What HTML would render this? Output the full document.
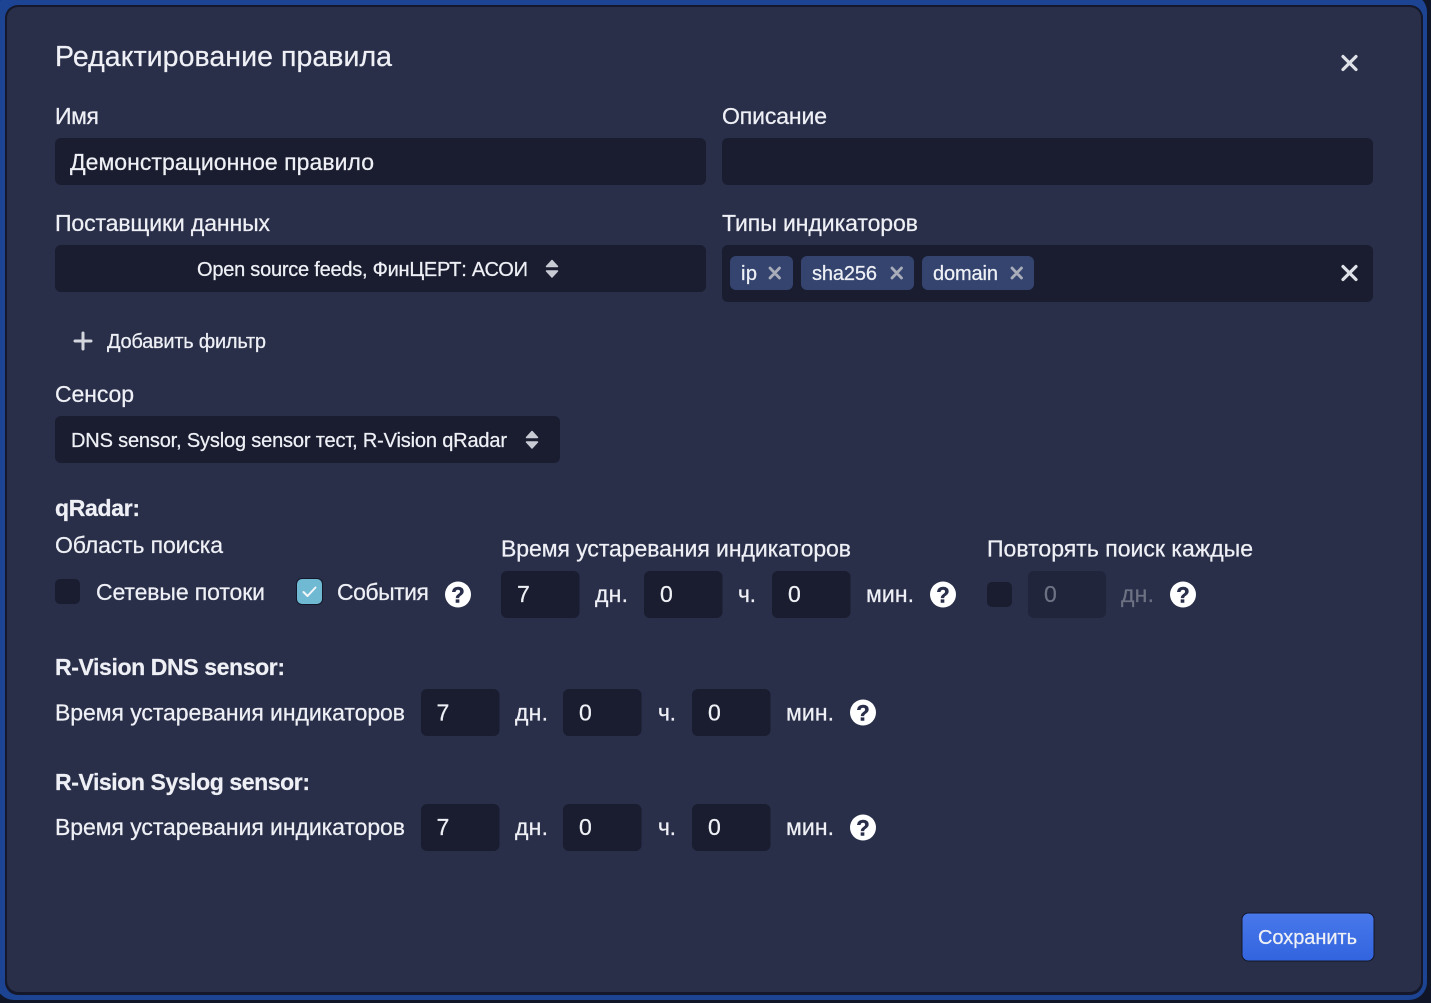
<!DOCTYPE html>
<html lang="ru"><head><meta charset="utf-8"><title>Редактирование правила</title>
<style>
html,body{margin:0;padding:0;background:#101627;width:1431px;height:1003px;overflow:hidden}
svg{display:block}
text{font-family:"Liberation Sans","DejaVu Sans",sans-serif;fill:#eef0f5;font-size:23px;stroke:#eef0f5;stroke-width:.25px}
.s{font-size:20px}
.b{font-weight:bold}
.q{font-size:22px;font-weight:bold;fill:#282d49;stroke:#282d49;stroke-width:.5px;text-anchor:middle}
</style></head><body>
<svg width="1431" height="1003" viewBox="0 0 1431 1003" xmlns="http://www.w3.org/2000/svg">
<defs><linearGradient id="g" x1="0" y1="0" x2="0" y2="1"><stop offset="0" stop-color="#4878ea"/><stop offset="1" stop-color="#3264df"/></linearGradient></defs>
<rect width="1431" height="1003" fill="#101627"/>
<rect x="-4" y="-6" width="1431" height="1006" rx="18" fill="#1c4493"/>
<rect x="5" y="5" width="1418" height="990" rx="13" fill="#14182a"/>
<rect x="7" y="7" width="1414" height="985" rx="11" fill="#292e49"/>

<text x="55" y="66" style="font-size:28.500px" textLength="337">Редактирование правила</text>
<g stroke="#dfe1e8" stroke-width="3.200" stroke-linecap="round"><path d="M1343 56.500l13 13M1356 56.500l-13 13"/></g>

<text x="55" y="124" textLength="44">Имя</text>
<rect x="55" y="138" width="651" height="47" rx="6" fill="#1a1d30"/>
<text x="70" y="170" textLength="304">Демонстрационное правило</text>
<text x="722" y="124" textLength="105">Описание</text>
<rect x="722" y="138" width="651" height="47" rx="6" fill="#1a1d30"/>

<text x="55" y="231" textLength="215">Поставщики данных</text>
<rect x="55" y="245" width="651" height="47" rx="6" fill="#1a1d30"/>
<text class="s" x="197" y="276" textLength="331">Open source feeds, ФинЦЕРТ: АСОИ</text>
<path d="M552 260.500l5.500 6h-11zM552 277l5.500-6h-11z" fill="#c8cbd4" stroke="#c8cbd4" stroke-width="1.500" stroke-linejoin="round"/>

<text x="722" y="231" textLength="196">Типы индикаторов</text>
<rect x="722" y="245" width="651" height="57" rx="6" fill="#1a1d30"/>
<rect x="730" y="256" width="63" height="34" rx="6" fill="#34446e"/>
<text class="s" x="741" y="280" textLength="16">ip</text>
<rect x="801" y="256" width="113" height="34" rx="6" fill="#34446e"/>
<text class="s" x="812" y="280" textLength="65">sha256</text>
<rect x="922" y="256" width="112" height="34" rx="6" fill="#34446e"/>
<text class="s" x="933" y="280" textLength="65">domain</text>
<g stroke="#a9adba" stroke-width="2.800" stroke-linecap="round"><path d="M770 268l9.500 10M779.500 268l-9.500 10M892 268l9.500 10M901.500 268l-9.500 10M1012 268l9.500 10M1021.500 268l-9.500 10"/></g>
<path d="M1343 266.500l13 13M1356 266.500l-13 13" stroke="#dfe1e8" stroke-width="3.200" stroke-linecap="round"/>

<path d="M83 333v16M75 341h16" stroke="#d4d6de" stroke-width="3" stroke-linecap="round"/>
<text class="s" x="107" y="348" textLength="159">Добавить фильтр</text>

<text x="55" y="402" textLength="79">Сенсор</text>
<rect x="55" y="416" width="505" height="47" rx="6" fill="#1a1d30"/>
<text class="s" x="71" y="447" textLength="436">DNS sensor, Syslog sensor тест, R-Vision qRadar</text>
<path d="M532 431.500l5.500 6h-11zM532 448l5.500-6h-11z" fill="#c8cbd4" stroke="#c8cbd4" stroke-width="1.500" stroke-linejoin="round"/>

<text class="b" x="55" y="516" textLength="85">qRadar:</text>
<text x="55" y="553" textLength="168">Область поиска</text>
<rect x="55" y="579" width="25" height="25" rx="5" fill="#1a1d30"/>
<text x="96" y="600" textLength="169">Сетевые потоки</text>
<rect x="296" y="578" width="27" height="27" rx="6" fill="#14182a"/>
<rect x="297" y="579" width="25" height="25" rx="5" fill="#6fb9d2"/>
<path d="M303.500 592l4 4 8-8.500" fill="none" stroke="#f2f6f8" stroke-width="2" stroke-linecap="round" stroke-linejoin="round"/>
<text x="337" y="600" textLength="92">События</text>
<circle cx="458" cy="594.500" r="13" fill="#fff"/><text class="q" x="458" y="602.500">?</text>

<text x="501" y="556.500" textLength="350">Время устаревания индикаторов</text>
<rect x="501" y="571" width="78.500" height="47" rx="6" fill="#1a1d30"/>
<text x="517" y="602">7</text>
<text x="595" y="602" textLength="33">дн.</text>
<rect x="644" y="571" width="78.500" height="47" rx="6" fill="#1a1d30"/>
<text x="660" y="602">0</text>
<text x="738" y="602" textLength="18">ч.</text>
<rect x="772" y="571" width="78.500" height="47" rx="6" fill="#1a1d30"/>
<text x="788" y="602">0</text>
<text x="866" y="602" textLength="48">мин.</text>
<circle cx="943" cy="594.500" r="13" fill="#fff"/><text class="q" x="943" y="602.500">?</text>

<text x="987" y="556.500" textLength="266">Повторять поиск каждые</text>
<rect x="987" y="582" width="25" height="25" rx="5" fill="#1a1d30"/>
<rect x="1028" y="571" width="78" height="47" rx="6" fill="#21253c"/>
<text x="1044" y="602" style="fill:#6d7283;stroke:#6d7283">0</text>
<text x="1121" y="602" textLength="33" style="fill:#6d7283;stroke:#6d7283">дн.</text>
<circle cx="1183" cy="594.500" r="13" fill="#fff"/><text class="q" x="1183" y="602.500">?</text>

<text class="b" x="55" y="675" textLength="230">R-Vision DNS sensor:</text>
<text x="55" y="720.500" textLength="350">Время устаревания индикаторов</text>
<rect x="421" y="689" width="78.500" height="47" rx="6" fill="#1a1d30"/>
<text x="436.500" y="720.500">7</text>
<text x="515" y="720.500" textLength="33">дн.</text>
<rect x="563" y="689" width="78.500" height="47" rx="6" fill="#1a1d30"/>
<text x="579" y="720.500">0</text>
<text x="658" y="720.500" textLength="18">ч.</text>
<rect x="692" y="689" width="78.500" height="47" rx="6" fill="#1a1d30"/>
<text x="708" y="720.500">0</text>
<text x="786" y="720.500" textLength="48">мин.</text>
<circle cx="863" cy="712.500" r="13" fill="#fff"/><text class="q" x="863" y="720.500">?</text>

<text class="b" x="55" y="790" textLength="255">R-Vision Syslog sensor:</text>
<text x="55" y="835" textLength="350">Время устаревания индикаторов</text>
<rect x="421" y="804" width="78.500" height="47" rx="6" fill="#1a1d30"/>
<text x="436.500" y="835">7</text>
<text x="515" y="835" textLength="33">дн.</text>
<rect x="563" y="804" width="78.500" height="47" rx="6" fill="#1a1d30"/>
<text x="579" y="835">0</text>
<text x="658" y="835" textLength="18">ч.</text>
<rect x="692" y="804" width="78.500" height="47" rx="6" fill="#1a1d30"/>
<text x="708" y="835">0</text>
<text x="786" y="835" textLength="48">мин.</text>
<circle cx="863" cy="827.500" r="13" fill="#fff"/><text class="q" x="863" y="835.500">?</text>

<rect x="1241.500" y="912.500" width="133" height="49" rx="7" fill="#14182a"/>
<rect x="1242.500" y="913.500" width="131" height="47" rx="6" fill="url(#g)"/>
<text class="s" x="1258" y="944" textLength="99">Сохранить</text>
</svg>
</body></html>
